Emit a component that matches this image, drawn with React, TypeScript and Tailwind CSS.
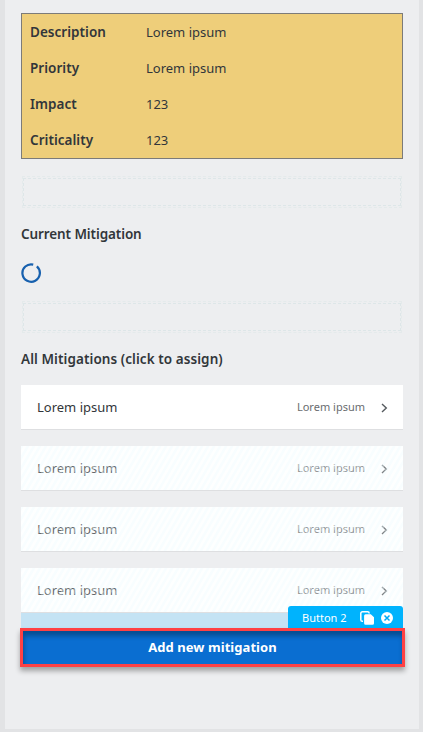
import React from "react";

const details = [
  ["Description", "Lorem ipsum"],
  ["Priority", "Lorem ipsum"],
  ["Impact", "123"],
  ["Criticality", "123"],
];

function DropZone() {
  return (
    <div className="mx-px h-[32px] border border-dashed border-[#e4eaeb] px-0 pt-px pb-px">
      <div className="h-full border border-dashed border-[#dde6e8]" />
    </div>
  );
}

function Chevron() {
  return (
    <svg width="7" height="10" viewBox="0 0 7 10" fill="none" stroke="#555a5e" strokeWidth="1.4" className="relative top-[0.5px] left-px">
      <path d="M1 1L5.3 5L1 9" />
    </svg>
  );
}

function MitigationRow({ placeholder }: { placeholder: boolean }) {
  return (
    <li className="relative flex h-[44px] items-center bg-white pr-4 pl-4 shadow-[0_1px_0_#dedfe1]">
      <span className="flex-1 pt-[2px] text-[13px]">Lorem ipsum</span>
      <span className="mr-[15px] text-[11px] text-[#6a6d70]">Lorem ipsum</span>
      <Chevron />
      {placeholder && (
        <div className="absolute inset-0 bg-[repeating-linear-gradient(120deg,rgba(241,252,255,0.5)_0px,rgba(241,252,255,0.5)_1.8px,rgba(250,255,255,0.25)_2.6px,rgba(250,255,255,0.25)_4.4px,rgba(241,252,255,0.5)_5.2px)]" />
      )}
    </li>
  );
}

export default function App() {
  return (
    <div className="h-[732px] w-[423px] overflow-hidden bg-[#e2e3e5] pr-1 pb-[3px] pl-[5px] font-['Noto_Sans',sans-serif] text-[13px] text-[#32363a]">
      <main className="h-full bg-[#edeef0] pt-[13px] pr-4 pl-4">
        <section className="h-[146px] border border-[#7c7b79] bg-[#eece7a]">
          {details.map(([label, value]) => (
            <div key={label} className="flex h-9 items-center pt-[2px] pl-2">
              <span className="w-[116px] pb-[2px] text-[13.5px] font-semibold tracking-[0.03px]">{label}</span>
              <span>{value}</span>
            </div>
          ))}
        </section>

        <div className="mt-[17px]">
          <DropZone />
        </div>
        <h2 className="mt-4 h-5 text-[13.5px] leading-5 font-semibold tracking-[-0.1px]">Current Mitigation</h2>
        <svg className="mt-[19px] block" width="20" height="20" viewBox="0 0 20 20" fill="none" stroke="#1760ae" strokeWidth="2.3">
          <path d="M12.3 1.3A9 9 0 1 0 16 3.2" transform="translate(.3 .3) scale(.97)" />
        </svg>
        <div className="mt-[18px]">
          <DropZone />
        </div>
        <h2 className="mt-4 h-5 text-[13.5px] leading-5 font-semibold tracking-[0.07px]">All Mitigations (click to assign)</h2>

        <ul className="mt-4 flex flex-col gap-[17px]">
          <MitigationRow placeholder={false} />
          <MitigationRow placeholder />
          <MitigationRow placeholder />
          <MitigationRow placeholder />
        </ul>

        <div className="relative mt-px h-[15px] bg-[#c4e3f4]">
          <div className="absolute right-0 bottom-0 flex h-[22px] w-[115px] items-center rounded-t-[3px] bg-[#00b3fd] pt-[2px] pl-[14px] text-[11px] text-white">
            <span className="w-[58px] whitespace-nowrap">Button 2</span>
            <svg width="14" height="14" viewBox="0 0 14 14">
              <path d="M3 10.3H2.4A1.6 1.6 0 0 1 .8 8.7V2.4A1.6 1.6 0 0 1 2.4.8H7.6A1.6 1.6 0 0 1 9.2 2.4" fill="none" stroke="white" strokeWidth="1.5" />
              <path d="M5.6 3.3H10.8L14 6.3V12.2A1.5 1.5 0 0 1 12.5 13.7H5.6A1.5 1.5 0 0 1 4.1 12.2V4.8A1.5 1.5 0 0 1 5.6 3.3Z" fill="white" />
            </svg>
            <svg className="ml-[7px]" width="12" height="12" viewBox="0 0 12 12">
              <circle cx="6" cy="6" r="6" fill="white" />
              <path d="M3.5 3.5L8.5 8.5M8.5 3.5L3.5 8.5" stroke="#00a9f5" strokeWidth="1.5" />
            </svg>
          </div>
        </div>
        <button className="relative -ml-px flex h-[39px] w-[385px] items-center justify-center border-[3px] border-[#ff4144] bg-[#0a6ed1] pt-px font-bold tracking-[0.06px] text-white shadow-[0_4px_5px_rgba(0,0,0,0.32),inset_1px_5px_5px_rgba(0,0,0,0.3)]">
          Add new mitigation
        </button>
      </main>
    </div>
  );
}
